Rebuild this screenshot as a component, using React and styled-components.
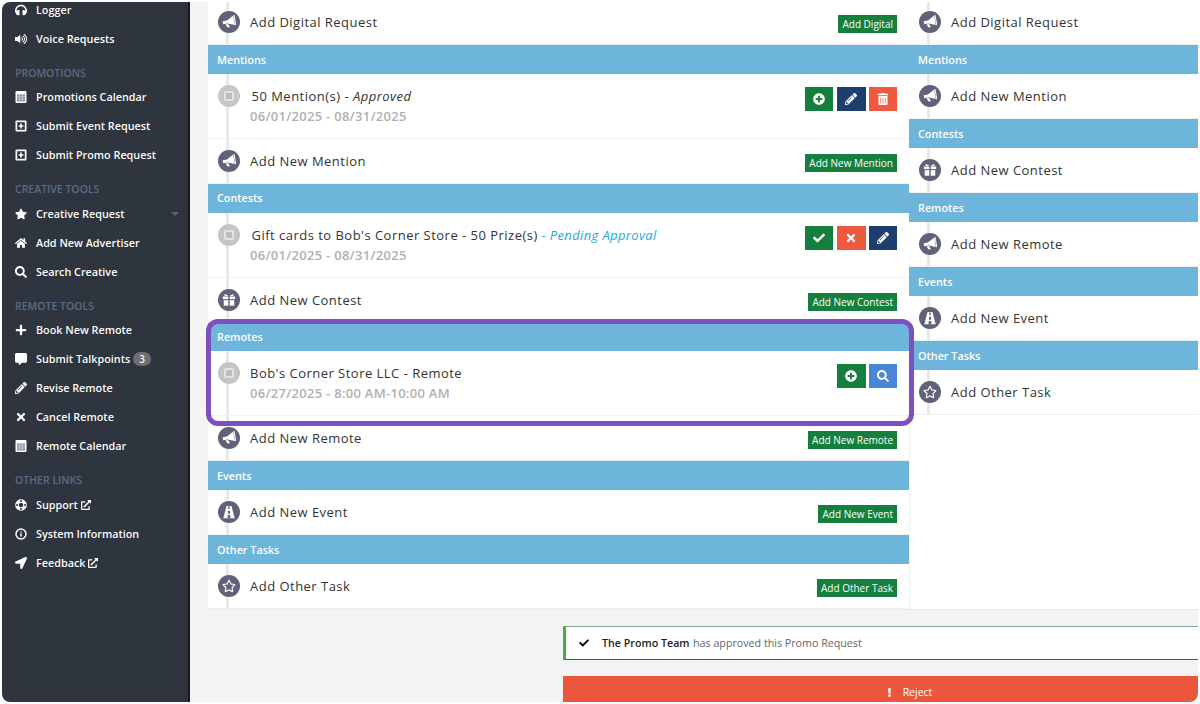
import React from "react";
import styled, { createGlobalStyle } from "styled-components";
import {
  FaHeadphones, FaVolumeUp, FaStar, FaHome, FaSearch, FaPlus, FaCommentAlt,
  FaPencilAlt, FaTimes, FaLifeRing, FaLocationArrow, FaRegStar,
  FaPlusCircle, FaTrashAlt, FaCheck, FaExclamation, FaExternalLinkAlt,
} from "react-icons/fa";
import { FiInfo } from "react-icons/fi";

const Global = createGlobalStyle`
  html, body { margin: 0; padding: 0; background: #fff; }
  body { font-family: "Open Sans", "Noto Sans", sans-serif; overflow: hidden; }
  * { box-sizing: border-box; }
`;

const Frame = styled.div`
  position: relative;
  width: 1200px;
  height: 704px;
  padding: 2px;
  overflow: hidden;
`;
const Window = styled.div`
  display: flex;
  width: 1196px;
  height: 700px;
  background: #f4f4f5;
  border-radius: 8px;
  overflow: hidden;
`;
const Sidebar = styled.nav`
  flex: 0 0 188px;
  height: 100%;
  background: #2f353e;
  border-right: 2px solid #15181c;
  overflow: hidden;
`;
const NavList = styled.div`
  margin-top: -7px;
  display: flex;
  flex-direction: column;
`;
const NavHead = styled.div`
  height: ${(p) => p.$h}px;
  padding: 11.5px 0 0 13px;
  font-size: 10.5px;
  line-height: 16px;
  font-weight: 600;
  color: #5a6b85;
`;
const NavItem = styled.div`
  display: flex;
  align-items: center;
  height: 29px;
  padding-left: 13px;
  color: #fff;
  font-size: 10.8px;
  font-weight: 600;
  text-shadow: 0 0 1px #0006;
  svg.lead { width: 12px; height: 12px; margin-right: 9px; flex: none; }
`;
const Ext = styled(FaExternalLinkAlt)`
  width: 10px;
  height: 10px;
  margin-left: 3px;
`;
const Badge = styled.span`
  margin-left: 3px;
  width: 18px;
  height: 14px;
  line-height: 14px;
  border-radius: 7px;
  background: #6d6f72;
  color: #fff;
  font-size: 10px;
  text-align: center;
`;
const Caret = styled.span`
  margin-left: auto;
  margin-right: 9px;
  width: 0;
  height: 0;
  border-left: 4px solid transparent;
  border-right: 4px solid transparent;
  border-top: 4px solid #5b6470;
`;
const Main = styled.main`
  flex: 1;
  padding-left: 18px;
  min-width: 0;
`;
const Panel = styled.div`
  display: grid;
  grid-template-columns: 702px 288px;
  margin-top: -2px;
  background: #fff;
  border-bottom: 1px solid #e9e9ec;
`;
const Column = styled.div`
  border-right: 1px solid #f0f0f2;
  &:last-child { border-right: 0; margin-left: -1px; }
`;
const SectionHead = styled.div`
  height: ${(p) => p.$h}px;
  line-height: ${(p) => p.$h - 0.5}px;
  padding: 0.5px 0 0 9px;
  background: #6db5db;
  color: #fff;
  font-size: 10.8px;
  font-weight: 600;
`;
const Row = styled.div`
  position: relative;
  display: flex;
  align-items: flex-start;
  height: ${(p) => (p.$tall ? 65 : 45)}px;
  padding: 11px 12px 0 10px;
  border-bottom: 1px solid #f0f0f2;
  background: #fff;
  &::before {
    content: "";
    position: absolute;
    left: 18px;
    top: 0;
    bottom: 0;
    width: 3px;
    background: #e8e8e8;
  }
`;
const Circle = styled.span`
  position: relative;
  flex: none;
  display: flex;
  align-items: center;
  justify-content: center;
  width: 22px;
  height: 22px;
  border-radius: 50%;
  background: #5f6278;
  color: #fff;
  svg { width: 14px; height: 14px; }
`;
const StatusCircle = styled(Circle)`
  background: #c6c6c6;
`;
const StopMark = styled.span`
  width: 10px;
  height: 10px;
  border: 2px solid #e3e3e3;
  border-radius: 2px;
  background: #bdbdbd;
`;
const RowBody = styled.div`
  flex: 1;
  min-width: 0;
  padding-left: 10px;
`;
const Title = styled.div`
  padding-left: ${(p) => (p.$indent ? 1.5 : 0)}px;
  font-size: 13px;
  line-height: 22px;
  letter-spacing: 0.48px;
  color: #333;
`;
const Pending = styled.em`
  color: #1fa7dd;
  font-weight: 500;
  letter-spacing: 0.36px;
`;
const DateLine = styled.div`
  font-size: 13px;
  line-height: 18px;
  letter-spacing: 0.28px;
  font-weight: 600;
  color: #b0b0b0;
`;
const Actions = styled.div`
  display: flex;
  gap: 3.5px;
  margin-top: 2px;
`;
const ActionBtn = styled.span`
  display: flex;
  align-items: center;
  justify-content: center;
  width: ${(p) => p.$w || 28}px;
  height: 24px;
  background: ${(p) => p.$bg};
  color: #fff;
  svg { width: 12px; height: 12px; }
`;
const AddBtn = styled.span`
  margin-top: 4px;
  height: 18px;
  line-height: 18px;
  padding: 0 4px;
  background: #157f3e;
  color: #fff;
  font-size: 10px;
  white-space: nowrap;
`;
const Alert = styled.div`
  display: flex;
  align-items: center;
  margin: 16.25px 0 0 355px;
  height: 34px;
  padding-left: 13px;
  background: #fff;
  border-top: 1px solid #7fa58a;
  border-bottom: 1px solid #1b7a3a;
  border-left: 3px solid #4bae3e;
  font-size: 10.7px;
  color: #666;
  svg { width: 10px; height: 10px; color: #111; margin-right: 13px; }
  b { font-weight: 600; color: #222; margin-right: 3.5px; }
`;
const Reject = styled.div`
  display: flex;
  align-items: center;
  justify-content: center;
  margin: 16px 0 0 355px;
  height: 26px;
  padding: 6px 0 0 56px;
  background: #ea573d;
  border-radius: 0 0 8px 0;
  color: #fff;
  font-size: 10.5px;
  svg { width: 9px; height: 9px; margin-right: 9px; }
`;
const Highlight = styled.div`
  position: absolute;
  left: 206px;
  top: 319px;
  width: 708px;
  height: 107px;
  border: 5px solid #7e4fc0;
  border-radius: 12px;
  pointer-events: none;
`;

const Bullhorn = () => (
  <svg viewBox="0 0 16 16" fill="#fff">
    <g transform="rotate(-10 8 8)">
      <path d="M1 6h5l8-4.5v11L6 9.5H1z" />
      <path d="M3.5 10h3l1.6 4H5.4z" />
      <rect x="14.4" y="1" width="1.2" height="12" />
    </g>
  </svg>
);
const Gift = () => (
  <svg viewBox="0 0 16 16" fill="#fff">
    <path d="M3.5 1.2 7.5 3.4H3.2A1.4 1.4 0 0 1 3.5 1.2zM12.5 1.2 8.5 3.4h4.3a1.4 1.4 0 0 0-.3-2.2z" />
    <rect x="1" y="4" width="6.2" height="3" />
    <rect x="8.8" y="4" width="6.2" height="3" />
    <rect x="2" y="8.2" width="5.2" height="6.3" />
    <rect x="8.8" y="8.2" width="5.2" height="6.3" />
  </svg>
);
const Road = () => (
  <svg viewBox="0 0 16 16">
    <path d="M5.2 1h5.6L14.5 15h-13z" fill="#fff" />
    <path d="M7.3 1.5h1.4l.2 3H7.1zM7 6.5h2l.3 3.5H6.7zM6.6 11.5h2.8l.2 3.5H6.4z" fill="#5f6278" />
  </svg>
);
const Calendar = (p) => (
  <svg viewBox="0 0 12 12" {...p}>
    <rect x="0.5" y="0" width="11" height="12" rx="1" fill="#fff" />
    <rect x="2" y="3.5" width="8" height="7" fill="#8a8f96" />
    <path d="M4.6 3.5v7M7.4 3.5v7M2 5.8h8M2 8.1h8" stroke="#d8dade" strokeWidth="0.7" />
  </svg>
);
const PlusBox = (p) => (
  <svg viewBox="0 0 12 12" {...p}>
    <rect x="0.5" y="0.5" width="11" height="11" rx="1" fill="#fff" />
    <rect x="2.2" y="2.2" width="7.6" height="7.6" fill="#2f353e" />
    <path d="M6 3.6v4.8M3.6 6h4.8" stroke="#fff" strokeWidth="1.6" />
  </svg>
);
const Ring = (p) => <FaLifeRing {...p} style={{ transform: "rotate(45deg)" }} />;
const InfoIcon = (p) => <FiInfo strokeWidth={3} {...p} />;

const nav = [
  ["i", FaHeadphones, "Logger"],
  ["i", FaVolumeUp, "Voice Requests"],
  ["h", "PROMOTIONS", 29],
  ["i", Calendar, "Promotions Calendar"],
  ["i", PlusBox, "Submit Event Request"],
  ["i", PlusBox, "Submit Promo Request"],
  ["h", "CREATIVE TOOLS", 30],
  ["i", FaStar, "Creative Request", { caret: true }],
  ["i", FaHome, "Add New Advertiser"],
  ["i", FaSearch, "Search Creative"],
  ["h", "REMOTE TOOLS", 29],
  ["i", FaPlus, "Book New Remote"],
  ["i", FaCommentAlt, "Submit Talkpoints", { badge: 3 }],
  ["i", FaPencilAlt, "Revise Remote"],
  ["i", FaTimes, "Cancel Remote"],
  ["i", Calendar, "Remote Calendar"],
  ["h", "OTHER LINKS", 30],
  ["i", Ring, "Support", { ext: true }],
  ["i", InfoIcon, "System Information"],
  ["i", FaLocationArrow, "Feedback", { ext: true }],
];

const GREEN = "#157f3e", NAVY = "#1c3f70", RED = "#ee5a40", BLUE = "#4a86d8";
const addRow = (Icon, label, btn) => ({ Icon, label, btn });

const leftCol = [
  { row: addRow(Bullhorn, "Add Digital Request", "Add Digital") },
  { head: "Mentions" },
  {
    tall: true,
    indent: true,
    title: <>50 Mention(s) - <em>Approved</em></>,
    date: "06/01/2025 - 08/31/2025",
    actions: [[GREEN, FaPlusCircle], [NAVY, FaPencilAlt, 29], [RED, FaTrashAlt]],
  },
  { row: addRow(Bullhorn, "Add New Mention", "Add New Mention") },
  { head: "Contests" },
  {
    tall: true,
    indent: true,
    title: <>Gift cards to Bob's Corner Store - 50 Prize(s) <Pending>- Pending Approval</Pending></>,
    date: "06/01/2025 - 08/31/2025",
    actions: [[GREEN, FaCheck], [RED, FaTimes, 29], [NAVY, FaPencilAlt]],
  },
  { row: addRow(Gift, "Add New Contest", "Add New Contest") },
  { head: "Remotes" },
  {
    tall: true,
    title: "Bob's Corner Store LLC - Remote",
    date: "06/27/2025 - 8:00 AM-10:00 AM",
    actions: [[GREEN, FaPlusCircle, 29], [BLUE, FaSearch]],
  },
  { row: addRow(Bullhorn, "Add New Remote", "Add New Remote") },
  { head: "Events" },
  { row: addRow(Road, "Add New Event", "Add New Event") },
  { head: "Other Tasks" },
  { row: addRow(FaRegStar, "Add Other Task", "Add Other Task") },
];

const rightCol = [
  { row: addRow(Bullhorn, "Add Digital Request") },
  { head: "Mentions" },
  { row: addRow(Bullhorn, "Add New Mention") },
  { head: "Contests" },
  { row: addRow(Gift, "Add New Contest") },
  { head: "Remotes" },
  { row: addRow(Bullhorn, "Add New Remote") },
  { head: "Events" },
  { row: addRow(Road, "Add New Event") },
  { head: "Other Tasks" },
  { row: addRow(FaRegStar, "Add Other Task") },
];

function Entry({ e, headH }) {
  if (e.head) return <SectionHead $h={headH}>{e.head}</SectionHead>;
  if (e.row) {
    const { Icon, label, btn } = e.row;
    return (
      <Row>
        <Circle><Icon /></Circle>
        <RowBody><Title>{label}</Title></RowBody>
        {btn && <AddBtn>{btn}</AddBtn>}
      </Row>
    );
  }
  return (
    <Row $tall>
      <StatusCircle><StopMark /></StatusCircle>
      <RowBody>
        <Title $indent={e.indent}>{e.title}</Title>
        <DateLine>{e.date}</DateLine>
      </RowBody>
      <Actions>
        {e.actions.map(([bg, Icon, w], i) => (
          <ActionBtn key={i} $bg={bg} $w={w}><Icon /></ActionBtn>
        ))}
      </Actions>
    </Row>
  );
}

export default function App() {
  return (
    <Frame>
      <Global />
      <Window>
        <Sidebar>
          <NavList>
            {nav.map((n, i) =>
              n[0] === "h" ? (
                <NavHead key={i} $h={n[2]}>{n[1]}</NavHead>
              ) : (
                <NavItem key={i}>
                  {React.createElement(n[1], { className: "lead" })}
                  {n[2]}
                  {n[3]?.ext && <Ext />}
                  {n[3]?.badge && <Badge>{n[3].badge}</Badge>}
                  {n[3]?.caret && <Caret />}
                </NavItem>
              )
            )}
          </NavList>
        </Sidebar>
        <Main>
          <Panel>
            <Column>{leftCol.map((e, i) => <Entry key={i} e={e} headH={28.75} />)}</Column>
            <Column>{rightCol.map((e, i) => <Entry key={i} e={e} headH={29} />)}</Column>
          </Panel>
          <Alert>
            <FaCheck />
            <b>The Promo Team</b> has approved this Promo Request
          </Alert>
          <Reject><FaExclamation />Reject</Reject>
        </Main>
      </Window>
      <Highlight />
    </Frame>
  );
}
